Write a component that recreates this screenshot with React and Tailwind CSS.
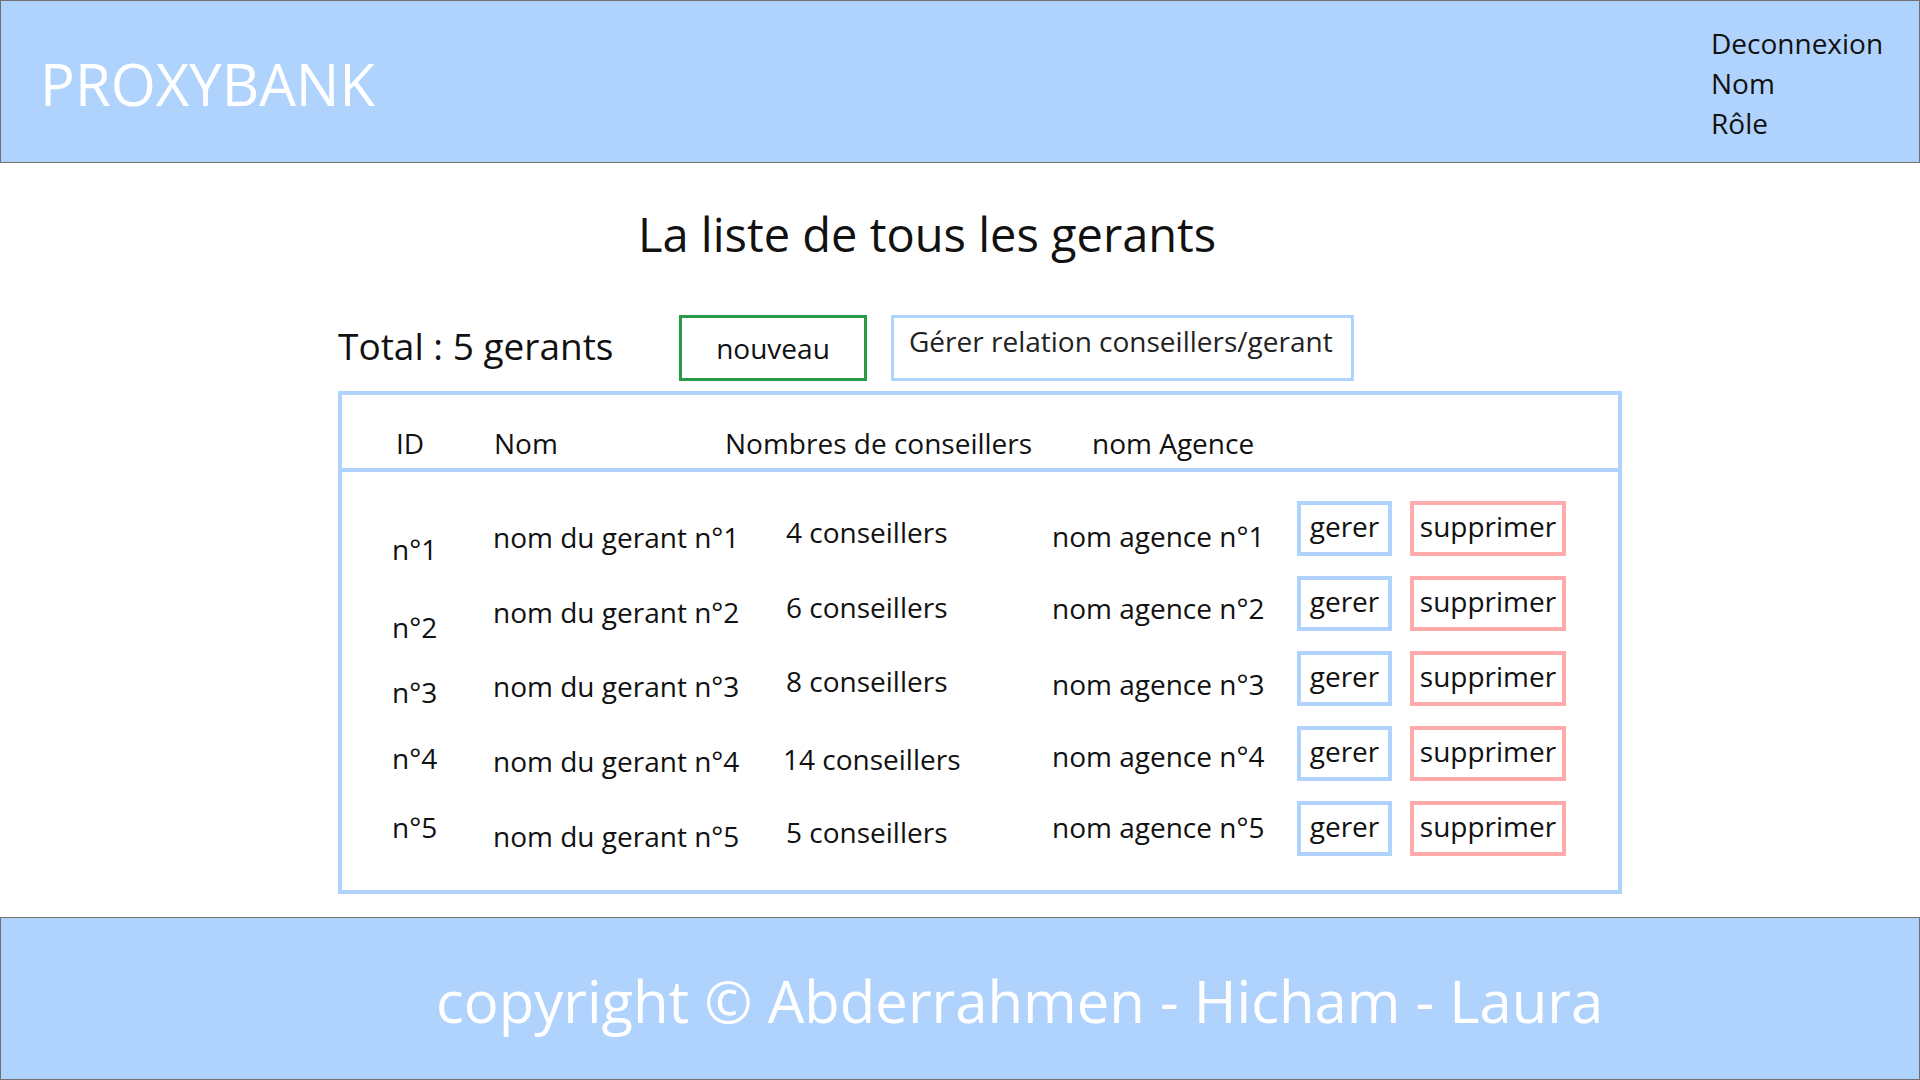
import React from "react";

const rows = [
  { id: "n°1", nom: "nom du gerant n°1", cons: "4 conseillers", ag: "nom agence n°1", p: ["pt-[34px]", "pt-[22px]", "pt-[17px]", "pt-[21px]"] },
  { id: "n°2", nom: "nom du gerant n°2", cons: "6 conseillers", ag: "nom agence n°2", p: ["pt-[37px]", "pt-[22px]", "pt-[17px]", "pt-[18px]"] },
  { id: "n°3", nom: "nom du gerant n°3", cons: "8 conseillers", ag: "nom agence n°3", p: ["pt-[27px]", "pt-[21px]", "pt-[16px]", "pt-[19px]"] },
  { id: "n°4", nom: "nom du gerant n°4", cons: "14 conseillers", ag: "nom agence n°4", p: ["pt-[18px]", "pt-[21px]", "pt-[19px]", "pt-[16px]"], consShift: "-ml-[3px]" },
  { id: "n°5", nom: "nom du gerant n°5", cons: "5 conseillers", ag: "nom agence n°5", p: ["pt-[12px]", "pt-[21px]", "pt-[17px]", "pt-[12px]"] },
];

export default function App() {
  return (
    <div className="w-[1920px] h-[1080px] flex flex-col bg-white text-[#111] font-['Open_Sans',sans-serif] overflow-hidden">
      {/* Header */}
      <header className="h-[163px] shrink-0 bg-[#b0d3fe] border border-[#707070] flex justify-between">
        <div className="pl-[39px] pt-[54px] text-[58px] leading-[58px] text-white">PROXYBANK</div>
        <div className="pt-[22px] w-[208px] text-[28px] leading-[40px] text-[#111]">
          <div>Deconnexion</div>
          <div>Nom</div>
          <div>Rôle</div>
        </div>
      </header>

      {/* Main */}
      <main className="h-[754px] shrink-0 flex flex-col pt-[48px]">
        <h1 className="pl-[638px] text-[47px] leading-[47px] font-normal">La liste de tous les gerants</h1>

        <div className="mt-[57px] ml-[338px] flex h-[66px]">
          <div className="w-[341px] pt-[12px] text-[37px] leading-[37px]">Total : 5 gerants</div>
          <div className="w-[188px] h-[66px] border-[3px] border-[#2b9a47] flex items-center justify-center text-[28px] leading-[28px]">
            nouveau
          </div>
          <div className="ml-[24px] w-[463px] h-[66px] border-[3px] border-[#b0d3fe] pl-[15px] pt-[9px] text-[28px] leading-[28px] text-[#222]">
            Gérer relation conseillers/gerant
          </div>
        </div>

        <div className="mt-[10px] ml-[338px] w-[1284px] h-[503px] border-4 border-[#b0d3fe] flex flex-col">
          <div className="flex pl-[54px] pt-[34px] pb-[11px] border-b-4 border-[#b0d3fe] text-[28px] leading-[28px]">
            <div className="w-[98px]">ID</div>
            <div className="w-[231px]">Nom</div>
            <div className="w-[367px]">Nombres de conseillers</div>
            <div>nom Agence</div>
          </div>
          <div className="flex flex-col pl-[50px] pt-[29px] text-[28px] leading-[28px]">
            {rows.map((r) => (
              <div key={r.id} className="flex h-[75px] items-start">
                <div className={"w-[101px] " + r.p[0]}>{r.id}</div>
                <div className={"w-[293px] " + r.p[1]}>{r.nom}</div>
                <div className={"w-[266px] " + r.p[2]}>
                  <div className={r.consShift || ""}>{r.cons}</div>
                </div>
                <div className={"w-[245px] " + r.p[3]}>{r.ag}</div>
                <div className="w-[95px] h-[55px] border-4 border-[#b0d3fe] pt-[7px] text-center">gerer</div>
                <div className="ml-[18px] w-[156px] h-[55px] border-4 border-[#ffabab] pt-[7px] text-center">supprimer</div>
              </div>
            ))}
          </div>
        </div>
      </main>

      {/* Footer */}
      <footer className="h-[163px] shrink-0 bg-[#b0d3fe] border border-[#707070] pl-[435px] pt-[54px]">
        <div className="text-[58px] leading-[58px] text-white whitespace-nowrap">copyright © Abderrahmen - Hicham - Laura</div>
      </footer>
    </div>
  );
}
